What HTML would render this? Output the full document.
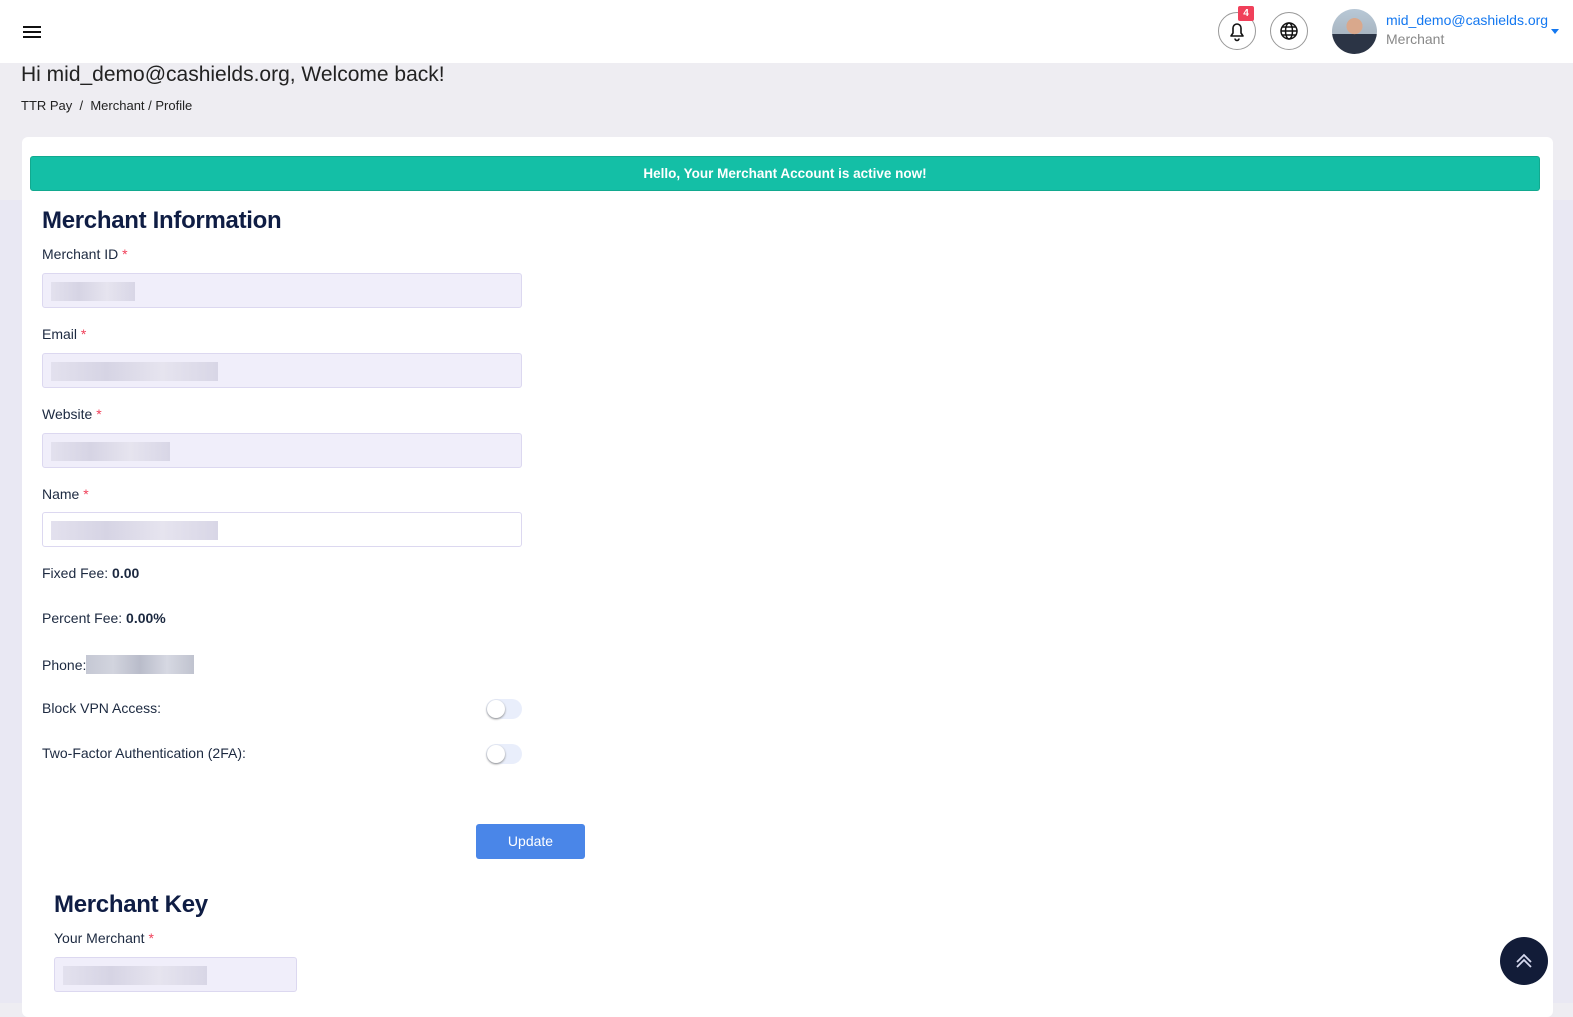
<!DOCTYPE html>
<html><head><meta charset="utf-8"><style>
*{box-sizing:border-box;margin:0;padding:0}
body{width:1573px;height:1003px;overflow:hidden;background:#eeedf2;font-family:"Liberation Sans",Arial,sans-serif;position:relative;color:#1c2940}
.top{position:absolute;left:0;top:0;width:1573px;height:63px;background:#fff}
.ham{position:absolute;left:23px;top:26px;width:18px}
.ham i{display:block;height:2px;background:#111;margin-bottom:3px}
.circ{position:absolute;top:12px;width:38px;height:38px;border:1px solid #999;border-radius:50%;background:#fff}
.badge{position:absolute;left:1238px;top:6px;width:16px;height:15px;background:#f0405a;color:#fff;font-size:10px;font-weight:bold;text-align:center;line-height:15px;border-radius:2px}
.av{position:absolute;left:1332px;top:9px;width:45px;height:45px;border-radius:50%;background:radial-gradient(circle at 50% 38%,#d9a88c 0 22%,transparent 23%),linear-gradient(180deg,#b8c8d6 0,#a9b6c2 55%,#2b3445 56%,#2b3445 100%)}
.uname{position:absolute;left:1386px;top:12px;color:#1478f0;font-size:14px}
.urole{position:absolute;left:1386px;top:31px;color:#888;font-size:14px}
.caret{position:absolute;left:1551px;top:29px;border:4px solid transparent;border-top:5px solid #1478f0}
h1.hi{position:absolute;left:21px;top:63px;font-size:21px;font-weight:normal;color:#222}
.bc{position:absolute;left:21px;top:98px;font-size:13px;color:#222}
.strip{position:absolute;left:0;top:200px;width:22px;height:803px;background:#e9e8f3}
.stripr{position:absolute;left:1553px;top:200px;width:20px;height:803px;background:#e9e8f3}
.card{position:absolute;left:22px;top:137px;width:1531px;height:880px;background:#fff;border-radius:6px}
.alert{position:absolute;left:30px;top:156px;width:1510px;height:35px;background:#14bfa6;border:1px solid #12a98f;border-radius:3px;color:#fff;font-size:13.5px;font-weight:bold;text-align:center;line-height:33px}
h2{position:absolute;font-size:24px;color:#0f1d44;font-weight:bold;letter-spacing:-.3px}
.lbl{position:absolute;font-size:14px;color:#1c2940}
.lbl b{color:#1c2940}
.req{color:#f0405a}
.inp{position:absolute;width:480px;height:35px;background:#f0eefa;border:1px solid #dcd8f0;border-radius:3px}
.inp.w{background:#fff}
.blur{position:absolute;top:8px;left:8px;height:19px;background:linear-gradient(90deg,#e3e1ee,#d6d4e4,#e6e4ef,#d8d6e6)}
.tog{position:absolute;left:486px;width:36px;height:20px;border-radius:10px;background:#e9eefb}
.tog i{position:absolute;left:1px;top:1px;width:18px;height:18px;border-radius:50%;background:#fff;box-shadow:0 1px 2px #888}
.btn{position:absolute;left:476px;top:824px;width:109px;height:35px;background:#4a86e8;border-radius:3px;color:#fff;font-size:14px;text-align:center;line-height:35px}
.up{position:absolute;left:1500px;top:937px;width:48px;height:48px;border-radius:50%;background:#121c38}
</style></head><body>
<div class="top">
 <div class="ham"><i></i><i></i><i></i></div>
 <div class="circ" style="left:1218px"><svg width="38" height="38" viewBox="0 0 38 38" style="position:absolute;left:-1px;top:-1px"><path d="M13 24h12l-2-3v-5a4 4 0 0 0-8 0v5z" fill="none" stroke="#111" stroke-width="1.6" stroke-linejoin="round"/><path d="M17 26.5a2 2 0 0 0 4 0" fill="none" stroke="#111" stroke-width="1.6"/></svg></div>
 <div class="badge">4</div>
 <div class="circ" style="left:1270px"><svg width="38" height="38" viewBox="0 0 38 38" style="position:absolute;left:-1px;top:-1px"><g fill="none" stroke="#111" stroke-width="1.5"><circle cx="19" cy="19" r="8"/><ellipse cx="19" cy="19" rx="3.5" ry="8"/><path d="M11 19h16M12.5 15h13M12.5 23h13"/></g></svg></div>
 <div class="av"></div>
 <div class="uname">mid_demo@cashields.org</div>
 <div class="urole">Merchant</div>
 <div class="caret"></div>
</div>
<h1 class="hi">Hi mid_demo@cashields.org, Welcome back!</h1>
<div class="bc">TTR Pay &nbsp;/ &nbsp;Merchant / Profile</div>
<div class="strip"></div><div class="stripr"></div>
<div class="card"></div>
<div class="alert">Hello, Your Merchant Account is active now!</div>
<h2 style="left:42px;top:207px">Merchant Information</h2>
<div class="lbl" style="left:42px;top:246px">Merchant ID <span class="req">*</span></div>
<div class="inp" style="left:42px;top:273px"><div class="blur" style="width:84px"></div></div>
<div class="lbl" style="left:42px;top:326px">Email <span class="req">*</span></div>
<div class="inp" style="left:42px;top:353px"><div class="blur" style="width:167px"></div></div>
<div class="lbl" style="left:42px;top:406px">Website <span class="req">*</span></div>
<div class="inp" style="left:42px;top:433px"><div class="blur" style="width:119px"></div></div>
<div class="lbl" style="left:42px;top:486px">Name <span class="req">*</span></div>
<div class="inp w" style="left:42px;top:512px"><div class="blur" style="width:167px"></div></div>
<div class="lbl" style="left:42px;top:565px">Fixed Fee: <b>0.00</b></div>
<div class="lbl" style="left:42px;top:610px">Percent Fee: <b>0.00%</b></div>
<div class="lbl" style="left:42px;top:655px">Phone:<span style="display:inline-block;width:108px;height:19px;vertical-align:-4px;background:linear-gradient(90deg,#c5c8d4,#d2d4de,#b9bcca,#d6d8e2,#c0c3cf)"></span></div>
<div class="lbl" style="left:42px;top:700px">Block VPN Access:</div>
<div class="tog" style="top:699px"><i></i></div>
<div class="lbl" style="left:42px;top:745px">Two-Factor Authentication (2FA):</div>
<div class="tog" style="top:744px"><i></i></div>
<div class="btn">Update</div>
<h2 style="left:54px;top:891px">Merchant Key</h2>
<div class="lbl" style="left:54px;top:930px">Your Merchant <span class="req">*</span></div>
<div class="inp" style="left:54px;top:957px;width:243px"><div class="blur" style="width:144px"></div></div>
<div class="up"><svg width="48" height="48" viewBox="0 0 48 48"><path d="M17 25l7-7 7 7M17 30l7-7 7 7" fill="none" stroke="#d6d9ef" stroke-width="1.8"/></svg></div>
</body></html>
